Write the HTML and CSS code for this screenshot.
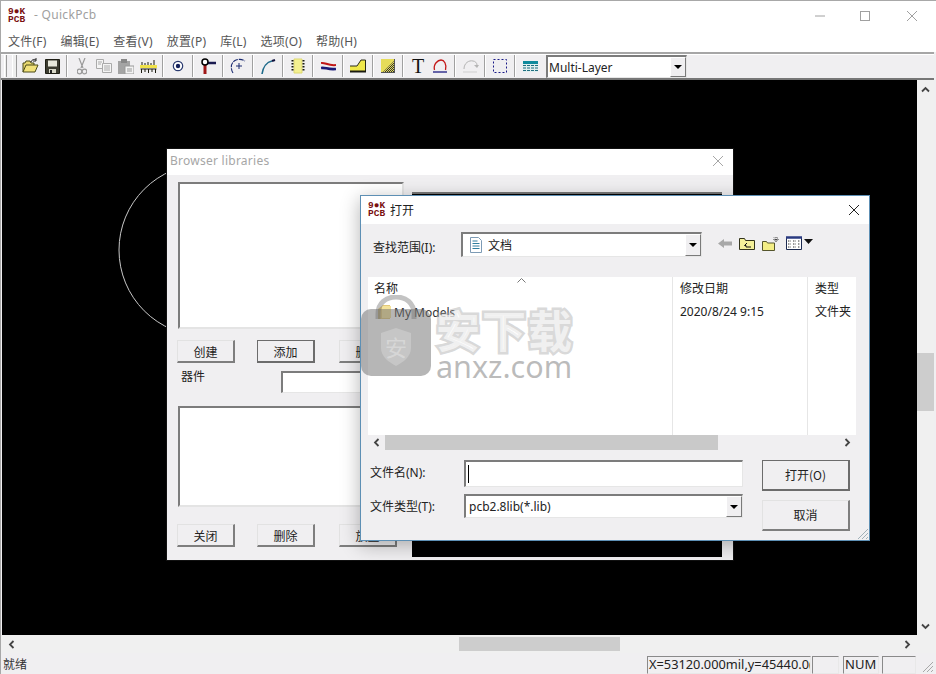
FILE: index.html
```html
<!DOCTYPE html>
<html lang="zh">
<head>
<meta charset="utf-8">
<title>QuickPcb</title>
<link rel="stylesheet" href="styles.css">
</head>
<body>
<div class="app">
  <header class="titlebar">
    <div class="logo"><span>9●K</span><span>PCB</span></div>
    <div class="app-title">- QuickPcb</div>
    <div class="win-btns">
      <svg width="46" height="30" viewBox="0 0 46 30"><path d="M18 15h10" stroke="#a0a0a0" stroke-width="1"/></svg>
      <svg width="46" height="30" viewBox="0 0 46 30"><rect x="17.500" y="10.500" width="9" height="9" fill="none" stroke="#a0a0a0"/></svg>
      <svg width="46" height="30" viewBox="0 0 46 30"><path d="M18 10l10 10M28 10l-10 10" stroke="#a0a0a0" stroke-width="1"/></svg>
    </div>
  </header>
  <nav class="menubar">
    <span>文件(F)</span><span>编辑(E)</span><span>查看(V)</span><span>放置(P)</span><span>库(L)</span><span>选项(O)</span><span>帮助(H)</span>
  </nav>
  <div class="toolbar">
    <i class="grip"></i><i class="grip grip-b"></i>
    <span class="tool"><svg width="17" height="16" viewBox="0 0 17 16"><path d="M1 14V5h2l1-2h4l1 2h3v2" fill="#e8d870" stroke="#4a4a18"/><path d="M1 14l3-7h12l-3 7z" fill="#f2e27a" stroke="#4a4a18"/><path d="M9 4c1-3 4-3 5-2M14 0v3h-3" fill="none" stroke="#222"/></svg></span>
    <span class="tool"><svg width="15" height="15" viewBox="0 0 15 15"><path d="M.5.5h14v14H.5z" fill="#3c3c30" stroke="#1e1e14"/><path d="M3 1.500h9v6H3z" fill="#e9e9dc"/><path d="M4 10h7v4H4z" fill="#d8d8c8"/><path d="M5 11h2v3H5z" fill="#222"/></svg></span>
    <i class="sep"></i>
    <span class="tool"><svg width="10" height="17" viewBox="0 0 10 17"><path d="M2 0l4 10M8 0L4 10" stroke="#9a9a9a" stroke-width="1.200" fill="none"/><circle cx="2.500" cy="13.500" r="2.300" fill="none" stroke="#9a9a9a" stroke-width="1.200"/><circle cx="7.500" cy="13.500" r="2.300" fill="none" stroke="#9a9a9a" stroke-width="1.200"/></svg></span>
    <span class="tool"><svg width="16" height="14" viewBox="0 0 16 14"><path d="M.5.500h7v9h-7z" fill="#f4f4f4" stroke="#aaa"/><path d="M6.500 4.500h9v9h-9z" fill="#f4f4f4" stroke="#aaa"/><path d="M2 3h4M2 5h3M8 7h6M8 9h6M8 11h6" stroke="#aaa"/></svg></span>
    <span class="tool"><svg width="16" height="15" viewBox="0 0 16 15"><path d="M0 2h12v13H0z" fill="#a4a4a4"/><path d="M3 0h6v4H3z" fill="#888"/><path d="M7 7h9v8H7z" fill="#f2f2f2" stroke="#999"/><path d="M9 10h5M9 12h5" stroke="#999"/></svg></span>
    <span class="tool"><svg width="17" height="13" viewBox="0 0 17 13"><path d="M0 6.500h17" stroke="#f0e24a" stroke-width="3"/><path d="M.5 9h16M1.500 9v4M5 9v3M8.500 9v4M12 9v3M15.500 9v4M2 5V2M5 5V3M8 5V2M11 5V3M14 5V0" stroke="#1c1c10" fill="none"/></svg></span>
    <i class="sep"></i>
    <span class="tool"><svg width="12" height="12" viewBox="0 0 12 12"><circle cx="6" cy="6" r="4.700" fill="#fff" stroke="#2a3a70" stroke-width="1.200"/><circle cx="6" cy="6" r="2.200" fill="#14205c"/></svg></span>
    <i class="sep"></i>
    <span class="tool"><svg width="16" height="16" viewBox="0 0 16 16"><path d="M5 5v11" stroke="#a01818" stroke-width="3"/><path d="M7 5h9" stroke="#1a1a50" stroke-width="2.500"/><circle cx="5" cy="4" r="3" fill="#fff" stroke="#000" stroke-width="1.500"/></svg></span>
    <i class="sep"></i>
    <span class="tool"><svg width="16" height="16" viewBox="0 0 16 16"><path d="M3 15C0 10 1 4 6 2c3-1 6-1 9 1" fill="none" stroke="#1a2a70" stroke-width="1.100" stroke-dasharray="5 1"/><path d="M9 5v6M6 8h6" stroke="#1a2a70"/></svg></span>
    <i class="sep"></i>
    <span class="tool"><svg width="15" height="15" viewBox="0 0 15 15"><path d="M1 15C2 8 6 3 11 2" fill="none" stroke="#1e6a8a" stroke-width="1.600"/><path d="M11 2l3-1" stroke="#10103c" stroke-width="2"/></svg></span>
    <i class="sep"></i>
    <span class="tool"><svg width="14" height="16" viewBox="0 0 14 16"><path d="M3 1h8v14H3z" fill="#f4f090" stroke="#ddd870"/><path d="M1.500 2v12M12.500 2v12" stroke="#1a1a10" stroke-width="2" stroke-dasharray="1.500 1.500"/></svg></span>
    <i class="sep"></i>
    <span class="tool"><svg width="15" height="11" viewBox="0 0 15 11"><path d="M0 2c4-1 7 3 15 2" fill="none" stroke="#c01818" stroke-width="2"/><path d="M0 7c4-1 7 2 15 1" fill="none" stroke="#1a1a78" stroke-width="2.600"/></svg></span>
    <i class="sep"></i>
    <span class="tool"><svg width="16" height="14" viewBox="0 0 16 14"><path d="M0 7h7l4-6h4v11H0z" fill="#f0e84a"/><path d="M0 7h7l4-6h4.500v11" fill="none" stroke="#2a2a18"/><path d="M0 12.500h16" stroke="#1a1a10" stroke-width="2"/></svg></span>
    <i class="sep"></i>
    <span class="tool"><svg width="14" height="14" viewBox="0 0 14 14"><defs><pattern id="dither" width="2" height="2" patternUnits="userSpaceOnUse"><rect width="2" height="2" fill="#e6dc5a"/><rect width="1" height="1" fill="#333"/><rect x="1" y="1" width="1" height="1" fill="#333"/></pattern></defs><rect width="14" height="14" fill="#e6dc5a"/><path d="M14 1v13H1z" fill="url(#dither)"/><path d="M0 13.500h14M13.500 0v14" stroke="#555"/></svg></span>
    <i class="sep"></i>
    <span class="tool tool-t">T</span>
    <span class="tool"><svg width="16" height="15" viewBox="0 0 16 15"><path d="M2.500 11C1 5 6 1 9 1s6 4 4.500 10" fill="none" stroke="#c41818" stroke-width="1.300"/><path d="M1 13h14" stroke="#1a1a80" stroke-width="1.300"/></svg></span>
    <i class="sep"></i>
    <span class="tool"><svg width="17" height="14" viewBox="0 0 17 14"><path d="M2 10C2 4 7 1 11 2c2 0 4 2 4 4" fill="none" stroke="#b4b4b4"/><path d="M12 6h5l-2 3z" fill="#b4b4b4"/><path d="M1 13h14" stroke="#cfcfcf"/></svg></span>
    <i class="sep"></i>
    <span class="tool"><svg width="14" height="14" viewBox="0 0 14 14"><rect x=".500" y=".500" width="13" height="13" fill="none" stroke="#1a1a88" stroke-dasharray="2 2"/></svg></span>
    <i class="sep"></i>
    <span class="tool"><svg width="15" height="11" viewBox="0 0 15 11"><path d="M0 0h15v11H0z" fill="#dfeeee"/><path d="M0 1.500h15" stroke="#0f8a9c" stroke-width="3"/><path d="M0 4.500h15M0 7h15M0 9.500h15" stroke="#1f6f80"/><path d="M3.500 3v8M7.500 3v8M11.500 3v8" stroke="#dfeeee"/></svg></span>
    <div class="combo combo-layer"><span class="combo-text">Multi-Layer</span><span class="drop"><i></i></span></div>
  </div>
  <main class="workspace">
    <div class="canvas-row">
      <div class="canvas">
        <svg class="drawing" width="915" height="555" viewBox="0 0 915 555"><circle cx="203" cy="170" r="86" fill="none" stroke="#c8c8c8"/></svg>
      </div>
      <div class="vscroll">
        <span class="arrow-btn"><svg width="9" height="7" viewBox="0 0 9 7"><path d="M1 5.500l3.500-3.500 3.500 3.500" fill="none" stroke="#444" stroke-width="1.800"/></svg></span>
        <div class="vtrack"><div class="vthumb"></div></div>
        <span class="arrow-btn"><svg width="9" height="7" viewBox="0 0 9 7"><path d="M1 1.500l3.500 3.500 3.500-3.500" fill="none" stroke="#444" stroke-width="1.800"/></svg></span>
      </div>
    </div>
    <div class="hscroll">
      <span class="arrow-btn arrow-h"><svg width="7" height="9" viewBox="0 0 7 9"><path d="M5.500 1L2 4.500 5.500 8" fill="none" stroke="#444" stroke-width="1.800"/></svg></span>
      <div class="htrack"><div class="hthumb"></div></div>
      <span class="arrow-btn arrow-h"><svg width="7" height="9" viewBox="0 0 7 9"><path d="M1.500 1L5 4.500 1.500 8" fill="none" stroke="#444" stroke-width="1.800"/></svg></span>
    </div>
  </main>
  <footer class="statusbar">
    <span class="status-text">就绪</span>
    <span class="pane pane-pos">X=53120.000mil,y=45440.0(</span>
    <span class="pane pane-a"></span>
    <span class="pane pane-num">NUM</span>
    <span class="pane pane-b"></span>
    <svg class="size-grip" width="14" height="14" viewBox="0 0 14 14"><path d="M13 3L3 13M13 7l-6 6M13 11l-2 2" stroke="#a8a8a8"/></svg>
  </footer>
</div>

<section class="dialog browser">
  <div class="dlg-title browser-title"><span>Browser libraries</span><svg class="dlg-x" width="12" height="12" viewBox="0 0 12 12"><path d="M1 1l10 10M11 1L1 11" stroke="#a6a6a6"/></svg></div>
  <div class="browser-body">
    <div class="browser-left">
      <div class="listbox list-top"></div>
      <div class="btn-row row-one"><button class="btn">创建</button><button class="btn btn-def">添加</button><button class="btn">删除</button></div>
      <div class="part-row"><span class="part-label">器件</span><div class="inset part-input"></div></div>
      <div class="listbox list-bottom"></div>
      <div class="btn-row row-two"><button class="btn">关闭</button><button class="btn">删除</button><button class="btn">放置</button></div>
    </div>
    <div class="preview"></div>
  </div>
</section>

<section class="dialog open">
  <div class="dlg-title open-title">
    <div class="logo logo-small"><span>9●K</span><span>PCB</span></div>
    <span>打开</span>
    <svg class="dlg-x" width="12" height="12" viewBox="0 0 12 12"><path d="M1 1l10 10M11 1L1 11" stroke="#222"/></svg>
  </div>
  <div class="look-row">
    <span class="look-label">查找范围(I):</span>
    <div class="combo combo-look">
      <svg class="doc-icon" width="12" height="16" viewBox="0 0 12 16"><path d="M.5.500h8l3 3v12H.5z" fill="#fff" stroke="#7d9bb5"/><path d="M2.500 4h5M2.500 6.500h7M2.500 9h7M2.500 11.500h7" stroke="#2f7f9f"/></svg>
      <span class="combo-text">文档</span><span class="drop"><i></i></span>
    </div>
    <div class="look-tools">
      <svg width="14" height="11" viewBox="0 0 14 11"><path d="M0 5.500L6 1v2.500h8v4H6V10z" fill="#a8a8a8"/></svg>
      <svg width="16" height="14" viewBox="0 0 16 14"><path d="M.5 13.500v-11h5l1 2h9v9z" fill="#f4f09a" stroke="#33331c"/><path d="M8 7l-2.500 2.500H7V11h5" fill="none" stroke="#111"/></svg>
      <svg width="17" height="15" viewBox="0 0 17 15"><path d="M.5 14.500v-9h4l1 1.500h7v7.500z" fill="#f4ee86" stroke="#55552c"/><path d="M14 1v5M11.500 3.500h5M12 1.500l4 4M16 1.500l-4 4" stroke="#333" stroke-dasharray="1 1"/></svg>
      <svg width="27" height="14" viewBox="0 0 27 14"><path d="M.5 1.500h15v12H.5z" fill="#fff" stroke="#1c2a50"/><path d="M0 1.500h16" stroke="#2a3a80" stroke-width="2.500"/><path d="M2 5h3M7 5h3M12 5h2M2 8h3M7 8h3M12 8h2M2 11h3M7 11h3M12 11h2" stroke="#333" stroke-dasharray="1 .6"/><path d="M18 3h9l-4.500 5z" fill="#111"/></svg>
    </div>
  </div>
  <div class="filelist">
    <div class="file-grid">
      <div class="col col-name"><span class="sort-up"><svg width="9" height="5" viewBox="0 0 9 5"><path d="M.5 4.500l4-4 4 4" fill="none" stroke="#777"/></svg></span><span class="col-head">名称</span>
        <span class="file-name"><svg width="14" height="16" viewBox="0 0 14 16"><path d="M0 5l5-4h7v14H0z" fill="#e2c878"/><path d="M4 2h9v12H4z" fill="#f4e29a"/></svg><span>My Models</span></span>
      </div>
      <div class="col"><span class="col-head">修改日期</span><span class="cell">2020/8/24 9:15</span></div>
      <div class="col col-last"><span class="col-head">类型</span><span class="cell">文件夹</span></div>
    </div>
    <div class="file-hscroll">
      <span class="arrow-btn arrow-small"><svg width="7" height="9" viewBox="0 0 7 9"><path d="M5.500 1L2 4.500 5.500 8" fill="none" stroke="#444" stroke-width="1.800"/></svg></span>
      <div class="file-track"><div class="file-thumb"></div></div>
      <span class="arrow-btn arrow-small"><svg width="7" height="9" viewBox="0 0 7 9"><path d="M1.500 1L5 4.500 1.500 8" fill="none" stroke="#444" stroke-width="1.800"/></svg></span>
    </div>
  </div>
  <div class="open-form">
    <span class="form-label label-name">文件名(N):</span>
    <div class="inset name-input"><i class="caret"></i></div>
    <button class="btn btn-def btn-big">打开(O)</button>
    <span class="form-label label-type">文件类型(T):</span>
    <div class="combo combo-type"><span class="combo-text">pcb2.8lib(*.lib)</span><span class="drop"><i></i></span></div>
    <button class="btn btn-big btn-cancel">取消</button>
  </div>
  <svg class="size-grip open-grip" width="12" height="12" viewBox="0 0 12 12"><path d="M11 1L1 11M11 5l-6 6M11 9l-2 2" stroke="#a0b0b8"/></svg>
</section>

<div class="watermark">
  <svg class="wm-lock" width="70" height="81" viewBox="0 0 70 81">
    <path d="M17 24V19C17 8 25 2 35 2s18 6 18 17v5" fill="none" stroke="#7a7a7a" stroke-opacity=".45" stroke-width="5"/>
    <rect y="14" width="70" height="67" rx="10" fill="#6e6e6e" fill-opacity=".5"/>
    <path d="M35 33l15 5v15c0 9-8 14-15 18-7-4-15-9-15-18V38z" fill="#fff" fill-opacity=".22"/>
    <text x="35" y="61" text-anchor="middle" class="wm-char">安</text>
  </svg>
  <div class="wm-words"><span class="wm-cn">安下载</span><span class="wm-en">anxz.com</span></div>
</div>
</body>
</html>
```
FILE: styles.css
```css
* { box-sizing: border-box; }
html, body { margin: 0; padding: 0; height: 100%; overflow: hidden; }
body {
  position: relative;
  width: 936px;
  height: 674px;
  font: 12px "Noto Sans", "Noto Sans CJK SC", sans-serif;
  color: #222;
  background: #f0eff1;
}
.app { display: flex; flex-direction: column; height: 674px; border-left: 1px solid #a8a8a8; }

.titlebar { display: flex; align-items: center; height: 30px; background: #fff; border-top: 1px solid #a8a8a8; padding-left: 7px; }
.logo { display: flex; flex-direction: column; width: 18px; font: bold 9.500px/9px "Liberation Mono", monospace; color: #7a1010; }
.logo span { display: block; height: 8px; line-height: 8px; overflow: visible; }
.app-title { margin-left: 8px; margin-top: -2px; font-size: 12px; color: #a0a0a0; letter-spacing: .3px; }
.win-btns { display: flex; margin-left: auto; margin-right: 1px; }
.win-btns svg { display: block; }

.menubar { display: flex; gap: 14px; align-items: center; height: 22px; padding-left: 7px; background: #fff; color: #555; font-size: 12px; letter-spacing: .2px; }

.toolbar { display: flex; align-items: center; height: 28px; padding-left: 3px; border-top: 2px solid #a6a6a6; border-bottom: 2px solid #777; background: #f0eff1; margin-right: 2px; box-shadow: inset 0 1px 0 #fff; }
.grip { width: 3px; height: 22px; border-left: 1px solid #fff; border-right: 1px solid #999; background: #eee; }
.grip-b { margin-left: 5px; margin-right: 2px; width: 5px; }
.tool { display: flex; justify-content: center; align-items: center; width: 22px; height: 22px; flex: none; }
.tool-t { font: 20px/22px "Liberation Serif", serif; color: #111; }
.sep { width: 8px; height: 22px; flex: none; background: linear-gradient(90deg, transparent 3px, #a0a0a0 3px, #a0a0a0 4px, #fff 4px, #fff 5px, transparent 5px); }

.combo { display: flex; align-items: center; background: #fff; border-style: solid; border-width: 2px 1px 1px 2px; border-color: #7c7c7c #e6e6e6 #e6e6e6 #7c7c7c; }
.combo-layer { width: 141px; height: 23px; margin-left: 5px; margin-top: 1px; }
.combo-text { flex: 1; padding-left: 1px; white-space: nowrap; }
.drop { display: flex; justify-content: center; align-items: center; width: 16px; height: 100%; background: #f0eff1; border: 1px solid; border-color: #fff #7a7a7a #7a7a7a #fff; }
.drop i { width: 0; height: 0; border: 4px solid transparent; border-top: 4px solid #000; border-bottom: 0; }

.workspace { flex: 1; display: flex; flex-direction: column; min-height: 0; }
.canvas-row { flex: 1; display: flex; min-height: 0; padding-left: 1px; }
.canvas { flex: 1; background: #000; position: relative; overflow: hidden; }
.drawing { position: absolute; left: 0; top: 0; }
.vscroll { display: flex; flex-direction: column; width: 17px; margin-right: 2px; background: #f0f0f0; }
.arrow-btn { display: flex; justify-content: center; align-items: center; width: 17px; height: 18px; flex: none; }
.vtrack { flex: 1; padding-top: 255px; }
.vthumb { height: 58px; background: #cdcdcd; }
.hscroll { display: flex; height: 18px; background: #f0f0f0; padding-right: 19px; }
.arrow-h { width: 20px; }
.htrack { flex: 1; padding: 2px 0 2px 438px; }
.hthumb { width: 161px; height: 14px; background: #cdcdcd; }

.statusbar { position: relative; display: flex; align-items: center; height: 21px; background: #f0eff1; }
.status-text { width: 646px; padding-left: 2px; color: #333; }
.pane { height: 18px; margin-top: 3px; line-height: 15px; padding-left: 1px; border: 1px solid; border-color: #8a8a8a #e8e8e8 #e8e8e8 #8a8a8a; white-space: nowrap; overflow: hidden; font-size: 13px; }
.pane-pos { width: 164px; font-size: 12.800px; }
.pane-a { width: 27px; margin-left: 1px; }
.pane-num { width: 36px; margin-left: 4px; }
.pane-b { width: 34px; margin-left: 3px; }
.size-grip { position: absolute; right: 2px; bottom: 1px; }

.dialog { position: absolute; background: #f0eff1; }
.dlg-title { display: flex; align-items: center; background: #fff; }
.dlg-x { margin-left: auto; }

.browser { left: 167px; top: 149px; width: 566px; height: 411px; box-shadow: 0 0 0 1px #111; }
.browser-title { height: 26px; padding: 0 9px 3px 3px; color: #a6a6a6; font-size: 12px; letter-spacing: .25px; }
.browser-body { display: flex; padding: 7px 0 0 11px; }
.browser-left { width: 227px; flex: none; }
.listbox { background: #fff; border: 2px solid; border-color: #7c7c7c #e4e4e4 #e4e4e4 #7c7c7c; }
.list-top { width: 226px; height: 147px; }
.btn-row { display: flex; gap: 22px; margin-left: -1px; }
.btn-row .btn:last-child { margin-left: 2px; }
.row-one { margin-top: 11px; }
.row-two { margin-top: 17px; }
.btn { width: 58px; height: 23px; padding: 0; font: 12px "Noto Sans CJK SC", sans-serif; color: #222; background: #f0eff1; border: 1px solid; border-color: #e2e2e2 #7e7e7e #7e7e7e #e2e2e2; border-width: 1px 2px 2px 1px; }
.btn-def { border-color: #6c6c6c; border-width: 1px 2px 2px 1px; }
.part-row { display: flex; margin-top: 8px; height: 22px; }
.part-label { width: 103px; padding-left: 3px; margin-top: -4px; }
.inset { background: #fff; border: 1px solid; border-width: 2px 1px 1px 2px; border-color: #7c7c7c #e6e6e6 #e6e6e6 #7c7c7c; }
.part-input { width: 116px; height: 22px; }
.list-bottom { width: 219px; height: 101px; margin-top: 13px; }
.preview { width: 310px; height: 365px; margin: 10px 0 0 7px; background: #000; border-top: 2px solid #777; }

.open { left: 360px; top: 195px; width: 510px; height: 346px; border: 1px solid #5d8fb4; box-shadow: 0 4px 18px rgba(0,0,0,.3); }
.open-title { height: 28px; padding: 0 9px 0 7px; color: #222; }
.logo-small { margin-right: 4px; }
.look-row { display: flex; align-items: center; height: 25px; margin-top: 8px; padding-left: 12px; }
.look-label { width: 88px; padding-top: 4px; }
.combo-look { width: 241px; height: 25px; padding-left: 7px; }
.combo-look .combo-text { padding-left: 6px; }
.combo-look .drop { height: 100%; }
.doc-icon { flex: none; }
.look-tools { display: flex; align-items: center; gap: 7px; margin-left: 16px; margin-top: -3px; }
.filelist { margin: 20px 13px 0 7px; }
.file-grid { display: grid; grid-template-columns: 305px 135px 48px; height: 158px; background: #fff; }
.col { position: relative; display: flex; flex-direction: column; padding: 2px 0 0 7px; border-right: 1px solid #e6e6e6; }
.col-name { padding-left: 6px; }
.col-last { border-right: 0; overflow: hidden; white-space: nowrap; }
.col-head { height: 22px; line-height: 19px; }
.cell { line-height: 22px; }
.sort-up { position: absolute; left: 149px; top: 1px; display: flex; }
.file-name { display: flex; align-items: center; gap: 2px; margin-left: 4px; height: 22px; color: #333; }
.file-hscroll { display: flex; height: 15px; align-items: center; }
.arrow-small { width: 17px; height: 15px; }
.file-track { flex: 1; }
.file-thumb { width: 333px; height: 15px; background: #c9c9c9; }
.open-form { display: grid; grid-template-columns: 94px 279px 88px; column-gap: 0; grid-template-rows: 27px 24px; row-gap: 7px; padding: 10px 0 0 9px; }
.form-label { align-self: center; }
.label-name { margin-top: -3px; }
.name-input { display: flex; align-items: center; height: 27px; padding-left: 2px; }
.caret { width: 1px; height: 18px; background: #000; }
.combo-type { height: 24px; padding-left: 2px; }
.btn-big { width: 88px; height: 31px; margin-left: 19px; padding-bottom: 1px; font-size: 12px; }
.btn-cancel { margin-top: 6px; }
.open-grip { right: 0; bottom: 0; }

.watermark { position: absolute; left: 361px; top: 295px; display: flex; pointer-events: none; }
.wm-lock { flex: none; }
.wm-char { font: 22px "Noto Sans CJK SC", sans-serif; fill: #fff; fill-opacity: .3; }
.wm-words { display: flex; flex-direction: column; margin-left: 5px; margin-top: 11px; }
.wm-cn { font: bold 44px/46px "Noto Sans CJK SC", sans-serif; letter-spacing: 2px; color: rgba(255,255,255,.65); -webkit-text-stroke: 5px rgba(170,170,170,.45); paint-order: stroke fill; white-space: nowrap; }
.wm-en { font: 30.500px/26px "Noto Sans", sans-serif; margin-top: 1px; color: rgba(120,120,120,.5); white-space: nowrap; }
```
